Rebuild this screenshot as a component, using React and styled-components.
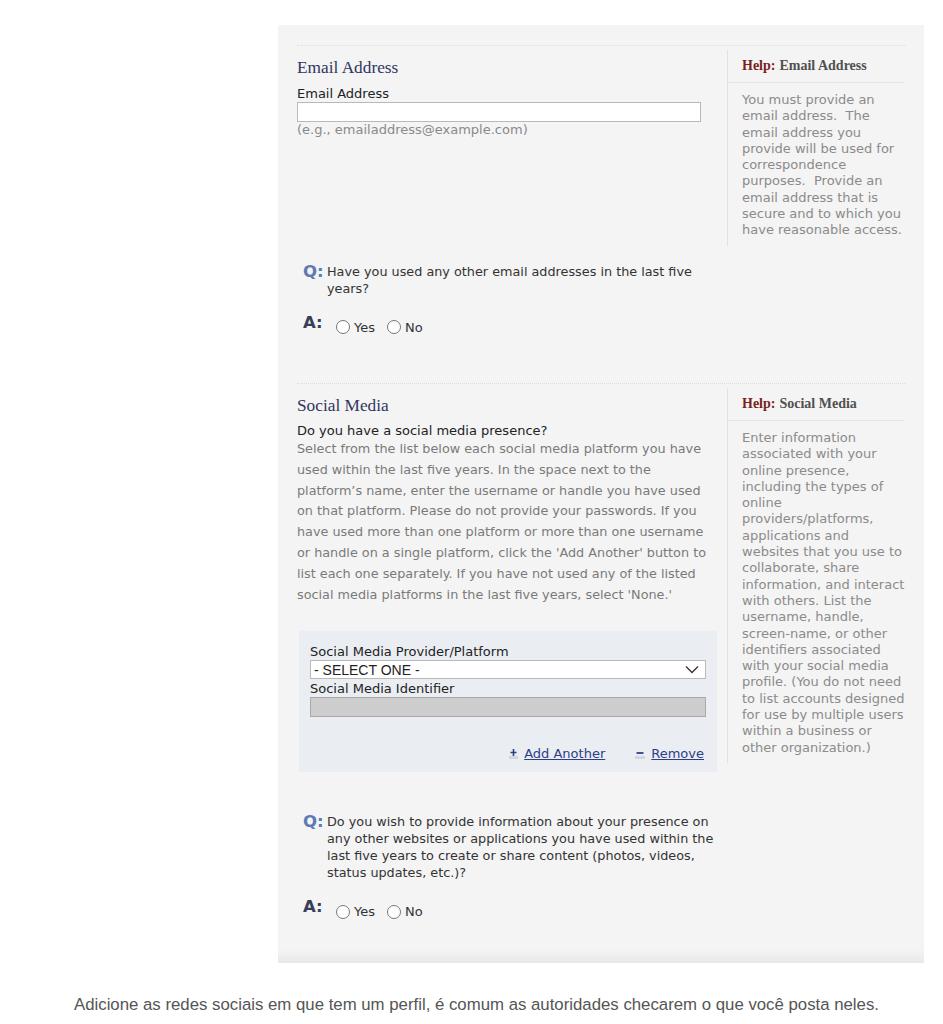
import React from "react";
import styled, { createGlobalStyle } from "styled-components";

const Global = createGlobalStyle`
  html, body { margin: 0; padding: 0; background: #ffffff; }
  body { font-family: "DejaVu Sans", Verdana, sans-serif; }
  * { box-sizing: border-box; }
`;

const Page = styled.div`
  width: 943px;
  padding-top: 25px;
`;

const Panel = styled.div`
  margin-left: 278px;
  width: 646px;
  height: 938px;
  background: #f4f4f4;
  padding: 20px 19px 0 19px;
  display: flex;
  flex-direction: column;
  position: relative;
`;

const BottomBand = styled.div`
  position: absolute;
  left: 0;
  right: 0;
  bottom: 0;
  height: 14px;
  background: linear-gradient(#f4f4f4, #e8e8e8);
`;

const Section = styled.section`
  border-top: 1px dotted #dcdcdc;
  ${(p) => (p.$h ? `height: ${p.$h}px;` : "flex: 1;")}
  display: flex;
  flex-direction: column;
`;

const Row = styled.div`
  display: grid;
  grid-template-columns: 430px 178px;
  align-items: start;
`;

const Main = styled.div`
  padding-top: ${(p) => p.$pt}px;
  display: flex;
  flex-direction: column;
`;

const Help = styled.aside`
  margin-top: 4px;
  border-left: 1px solid #e2e2e2;
  padding-bottom: 7px;
`;

const HelpTitle = styled.div`
  height: 33px;
  border-bottom: 1px solid #e6e6e6;
  padding-left: 14px;
  display: flex;
  align-items: center;
  font-family: "Liberation Serif", "Times New Roman", serif;
  font-weight: bold;
  font-size: 14px;
  color: #505050;
  span { color: #7a1f1f; margin-right: 4px; }
`;

const HelpText = styled.p`
  margin: 0;
  padding: 9px 0 0 14px;
  font-size: 13px;
  line-height: 16.3px;
  color: #8b8b8b;
  white-space: pre;
`;

const Heading = styled.h2`
  margin: 0 0 ${(p) => p.$mb}px 0;
  font-family: "Liberation Serif", "Times New Roman", serif;
  font-weight: normal;
  font-size: 17.3px;
  line-height: 20px;
  color: #32365e;
`;

const Label = styled.div`
  font-size: 13px;
  line-height: 16px;
  color: #222;
  margin-top: ${(p) => p.$mt || 0}px;
`;

const TextInput = styled.div`
  width: ${(p) => p.$w}px;
  height: ${(p) => p.$h}px;
  background: ${(p) => (p.$disabled ? "#cdcdcd" : "#ffffff")};
  border: 1px solid ${(p) => (p.$disabled ? "#a9a9a9" : "#b9b9b9")};
`;

const Hint = styled.div`
  font-size: 13px;
  line-height: 16px;
  color: #8a8a8a;
`;

const Para = styled.p`
  margin: 0;
  width: 416px;
  font-size: 12.8px;
  line-height: 20.8px;
  color: #7a7a7a;
`;

const QBlock = styled.div`
  margin-top: ${(p) => p.$mt}px;
  padding-left: 6px;
  display: flex;
  align-items: flex-start;
`;

const QLetter = styled.span`
  width: 24px;
  flex: none;
  font-size: 16.5px;
  line-height: 17px;
  font-weight: bold;
  color: ${(p) => (p.$answer ? "#3a3e5a" : "#5d7bb1")};
`;

const QText = styled.div`
  width: 395px;
  font-size: 12.8px;
  line-height: 17px;
  color: #333;
`;

const ARow = styled.div`
  margin-top: ${(p) => p.$mt}px;
  padding-left: 6px;
  display: flex;
  align-items: flex-start;
`;

const Radios = styled.div`
  display: flex;
  align-items: center;
  margin-top: 6px;
  margin-left: 9px;
  gap: 12px;
`;

const RadioLabel = styled.label`
  display: flex;
  align-items: center;
  gap: 4px;
  font-size: 13px;
  line-height: 15px;
  color: #333;
`;

const Radio = styled.input.attrs({ type: "radio" })`
  appearance: none;
  margin: 0;
  width: 14px;
  height: 14px;
  border: 1px solid #777;
  border-radius: 50%;
  background: #fff;
`;

const SocialBox = styled.div`
  margin: 26px 0 0 2px;
  width: 418px;
  height: 141px;
  background: #eaeef3;
  padding: 13px 11px 0 11px;
  display: flex;
  flex-direction: column;
`;

const Select = styled.div`
  width: 396px;
  height: 19px;
  background: #fff;
  border: 1px solid #b9b9b9;
  padding: 0 6px 0 3px;
  display: flex;
  align-items: center;
  justify-content: space-between;
  font-family: "Liberation Sans", Arial, sans-serif;
  font-size: 14px;
  color: #222;
`;

const Actions = styled.div`
  margin-top: 29px;
  width: 394px;
  display: flex;
  justify-content: flex-end;
  gap: 30px;
`;

const ActionLink = styled.a`
  display: flex;
  align-items: center;
  gap: 6px;
  font-size: 13px;
  color: #2d3e85;
  text-decoration: underline;
  cursor: pointer;
`;

const Caption = styled.p`
  margin: 32px 0 0 0;
  padding-left: 10px;
  text-align: center;
  font-family: "Liberation Sans", Arial, sans-serif;
  font-size: 16.8px;
  color: #555;
`;

const Chevron = () => (
  <svg width="14" height="9" viewBox="0 0 14 9">
    <path d="M1 1.5 L7 7.5 L13 1.5" fill="none" stroke="#333" strokeWidth="1.3" />
  </svg>
);

const PlusIcon = () => (
  <svg width="9" height="11" viewBox="0 0 9 11">
    <rect x="0" y="8" width="9" height="3" fill="#d3d6dc" />
    <path d="M4.5 1 V8 M1.5 4.5 H7.5" stroke="#2d3e85" strokeWidth="1.6" />
  </svg>
);

const MinusIcon = () => (
  <svg width="10" height="11" viewBox="0 0 10 11">
    <rect x="0" y="8" width="10" height="3" fill="#d3d6dc" />
    <path d="M1.5 5 H8.5" stroke="#2d3e85" strokeWidth="1.8" />
  </svg>
);

const YesNo = ({ name }) => (
  <Radios>
    <RadioLabel>
      <Radio name={name} />
      Yes
    </RadioLabel>
    <RadioLabel>
      <Radio name={name} />
      No
    </RadioLabel>
  </Radios>
);

export default function App() {
  return (
    <Page>
      <Global />
      <Panel>
        <Section $h={338}>
          <Row>
            <Main $pt={12}>
              <Heading $mb={8}>Email Address</Heading>
              <Label>Email Address</Label>
              <TextInput $w={404} $h={20} />
              <Hint>(e.g., emailaddress@example.com)</Hint>
            </Main>
            <Help>
              <HelpTitle>
                <span>Help:</span> Email Address
              </HelpTitle>
              <HelpText>
                {"You must provide an\nemail address.  The\nemail address you\nprovide will be used for\ncorrespondence\npurposes.  Provide an\nemail address that is\nsecure and to which you\nhave reasonable access."}
              </HelpText>
            </Help>
          </Row>
          <QBlock $mt={17}>
            <QLetter>Q:</QLetter>
            <QText>Have you used any other email addresses in the last five years?</QText>
          </QBlock>
          <ARow $mt={17}>
            <QLetter $answer>A:</QLetter>
            <YesNo name="q1" />
          </ARow>
        </Section>
        <Section>
          <Row>
            <Main $pt={12}>
              <Heading $mb={7}>Social Media</Heading>
              <Label>Do you have a social media presence?</Label>
              <Para>
                Select from the list below each social media platform you have used within the last five years. In the space next to the platform’s name, enter the username or handle you have used on that platform. Please do not provide your passwords. If you have used more than one platform or more than one username or handle on a single platform, click the 'Add Another' button to list each one separately. If you have not used any of the listed social media platforms in the last five years, select 'None.'
              </Para>
              <SocialBox>
                <Label>Social Media Provider/Platform</Label>
                <Select>
                  <span>- SELECT ONE -</span>
                  <Chevron />
                </Select>
                <Label $mt={2}>Social Media Identifier</Label>
                <TextInput $w={396} $h={20} $disabled />
                <Actions>
                  <ActionLink>
                    <PlusIcon />
                    Add Another
                  </ActionLink>
                  <ActionLink>
                    <MinusIcon />
                    Remove
                  </ActionLink>
                </Actions>
              </SocialBox>
            </Main>
            <Help>
              <HelpTitle>
                <span>Help:</span> Social Media
              </HelpTitle>
              <HelpText>
                {"Enter information\nassociated with your\nonline presence,\nincluding the types of\nonline\nproviders/platforms,\napplications and\nwebsites that you use to\ncollaborate, share\ninformation, and interact\nwith others. List the\nusername, handle,\nscreen-name, or other\nidentifiers associated\nwith your social media\nprofile. (You do not need\nto list accounts designed\nfor use by multiple users\nwithin a business or\nother organization.)"}
              </HelpText>
            </Help>
          </Row>
          <QBlock $mt={41}>
            <QLetter>Q:</QLetter>
            <QText>
              Do you wish to provide information about your presence on any other websites or applications you have used within the last five years to create or share content (photos, videos, status updates, etc.)?
            </QText>
          </QBlock>
          <ARow $mt={17}>
            <QLetter $answer>A:</QLetter>
            <YesNo name="q2" />
          </ARow>
        </Section>
        <BottomBand />
      </Panel>
      <Caption>
        Adicione as redes sociais em que tem um perfil, é comum as autoridades checarem o que você posta neles.
      </Caption>
    </Page>
  );
}
